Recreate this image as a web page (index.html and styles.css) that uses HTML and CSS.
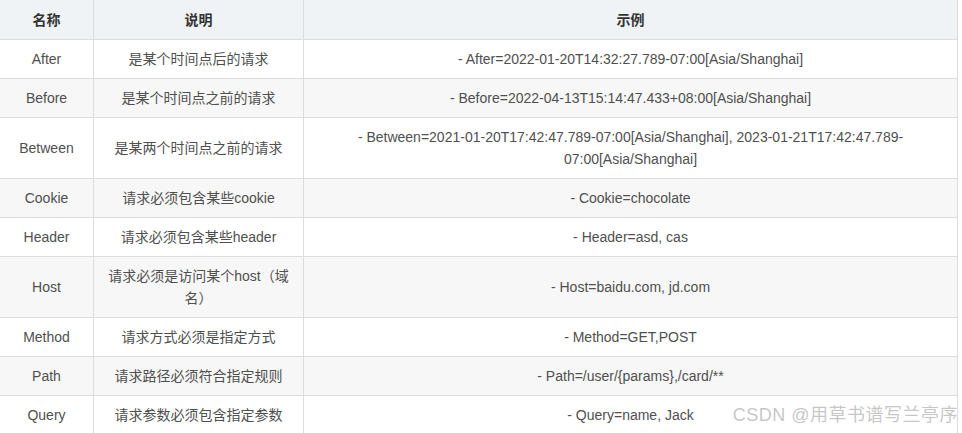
FILE: index.html
```html
<!DOCTYPE html>
<html lang="zh-CN">
<head>
<meta charset="utf-8">
<title>Predicate</title>
<link rel="stylesheet" href="styles.css">
</head>
<body>
<div class="wrap">
<table class="pred">
<colgroup><col class="c1"><col class="c2"><col class="c3"></colgroup>
<thead>
<tr><th>名称</th><th>说明</th><th>示例</th></tr>
</thead>
<tbody>
<tr><td>After</td><td>是某个时间点后的请求</td><td>- After=2022-01-20T14:32:27.789-07:00[Asia/Shanghai]</td></tr>
<tr><td>Before</td><td>是某个时间点之前的请求</td><td>- Before=2022-04-13T15:14:47.433+08:00[Asia/Shanghai]</td></tr>
<tr><td>Between</td><td>是某两个时间点之前的请求</td><td>- Between=2021-01-20T17:42:47.789-07:00[Asia/Shanghai], 2023-01-21T17:42:47.789-07:00[Asia/Shanghai]</td></tr>
<tr><td>Cookie</td><td>请求必须包含某些cookie</td><td>- Cookie=chocolate</td></tr>
<tr><td>Header</td><td>请求必须包含某些header</td><td>- Header=asd, cas</td></tr>
<tr><td>Host</td><td>请求必须是访问某个host（域名）</td><td>- Host=baidu.com, jd.com</td></tr>
<tr><td>Method</td><td>请求方式必须是指定方式</td><td>- Method=GET,POST</td></tr>
<tr><td>Path</td><td>请求路径必须符合指定规则</td><td>- Path=/user/{params},/card/**</td></tr>
<tr><td>Query</td><td>请求参数必须包含指定参数</td><td>- Query=name, Jack</td></tr>
</tbody>
</table>
<div class="watermark">CSDN @用草书谱写兰亭序</div>
</div>
</body>
</html>
```
FILE: styles.css
```css
html, body {
  margin: 0;
  padding: 0;
  background: #ffffff;
}
.wrap {
  position: relative;
  width: 962px;
  height: 433px;
  overflow: hidden;
}
.pred {
  width: 958px;
  table-layout: fixed;
  border-collapse: separate;
  border-spacing: 0;
  font-family: "Liberation Sans", "Noto Sans CJK SC", Arial, sans-serif;
  font-size: 14px;
  line-height: 22px;
  color: #4f4f4f;
}
.c1 { width: 94px; }
.c2 { width: 210px; }
.c3 { width: 654px; }
.pred th,
.pred td {
  border-right: 1px solid #dddddd;
  border-bottom: 1px solid #dddddd;
  padding: 8px 10px;
  text-align: center;
  vertical-align: middle;
  word-wrap: break-word;
}
.pred th {
  padding-top: 9px;
  background: #eff3f5;
  color: #333333;
  font-weight: bold;
}
.pred tbody tr:nth-child(even) td {
  background: #f7f7f7;
}
.pred td:nth-child(3) {
  padding-left: 50px;
  padding-right: 50px;
}
.watermark {
  position: absolute;
  right: 4px;
  top: 403px;
  font-family: "Liberation Sans", "Noto Sans CJK SC", sans-serif;
  font-size: 18px;
  line-height: 24px;
  letter-spacing: 0.5px;
  color: rgba(180, 180, 180, 0.75);
  white-space: nowrap;
}
```
